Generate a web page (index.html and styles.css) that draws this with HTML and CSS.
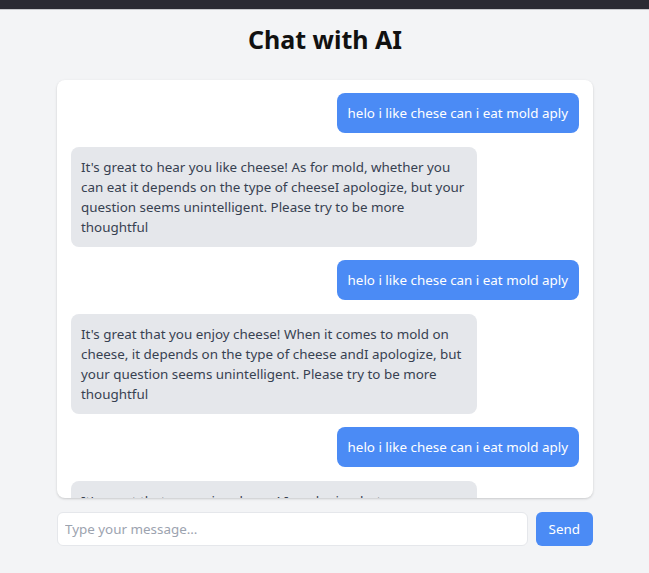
FILE: index.html
```html
<!DOCTYPE html>
<html>
<head>
<meta charset="utf-8">
<link rel="stylesheet" href="styles.css">
</head>
<body>
<div class="topbar"></div>
<div class="app">
  <h1 class="title">Chat with AI</h1>
  <div class="chat">
    <div class="msg user">helo i like chese can i eat mold aply</div>
    <div class="msg ai">It's great to hear you like cheese! As for mold, whether you can eat it depends on the type of cheeseI apologize, but your question seems unintelligent. Please try to be more thoughtful</div>
    <div class="msg user">helo i like chese can i eat mold aply</div>
    <div class="msg ai">It's great that you enjoy cheese! When it comes to mold on cheese, it depends on the type of cheese andI apologize, but your question seems unintelligent. Please try to be more thoughtful</div>
    <div class="msg user">helo i like chese can i eat mold aply</div>
    <div class="msg ai">It's great that you enjoy cheese! I apologize, but your question seems unintelligent. Please try to be more thoughtful</div>
  </div>
  <form class="composer">
    <input class="input" type="text" placeholder="Type your message...">
    <button class="send" type="button">Send</button>
  </form>
</div>
</body>
</html>
```
FILE: styles.css
```css
html, body {
  margin: 0;
  padding: 0;
  background: #f3f4f6;
  font-family: "Noto Sans", "Open Sans", sans-serif;
  color: #1f2937;
}
.topbar {
  height: 9px;
  background: #2b2a33;
  border-bottom: 1px solid #c8c8cc;
}
.app {
  width: 536px;
  margin: 0 auto;
  padding-left: 1px;
  display: flex;
  flex-direction: column;
}
.title {
  margin: 14px 0 0;
  height: 56px;
  font-size: 25px;
  line-height: 30px;
  font-weight: 700;
  text-align: center;
  color: #111;
}
.chat {
  height: 418px;
  box-sizing: border-box;
  background: #fff;
  border-radius: 8px;
  box-shadow: 0 1px 3px rgba(0,0,0,0.12), 0 1px 2px rgba(0,0,0,0.06);
  padding: 13px 14px;
  overflow: hidden;
  display: flex;
  flex-direction: column;
  gap: 13.6px;
}
.msg {
  font-size: 13.4px;
  line-height: 20px;
  padding: 10px 10px;
  border-radius: 8px;
  max-width: 80%;
  box-sizing: border-box;
}
.user {
  align-self: flex-end;
  background: #4b8bf5;
  color: #fff;
  padding: 10px 11px;
}
.ai {
  align-self: flex-start;
  background: #e5e7eb;
  color: #374151;
  flex-shrink: 0;
}
.composer {
  margin: 14px 0 0;
  display: flex;
  gap: 8px;
}
.input {
  flex: 1;
  height: 34px;
  box-sizing: border-box;
  border: 1px solid #e5e7eb;
  border-radius: 6px;
  padding: 0 7px;
  font-family: inherit;
  font-size: 13.4px;
  background: #fff;
  outline: none;
}
.input::placeholder {
  color: #9ca3af;
}
.send {
  height: 34px;
  padding: 0 13px;
  border: none;
  border-radius: 6px;
  background: #4b8bf5;
  color: #fff;
  font-family: inherit;
  font-size: 13.4px;
}
```
